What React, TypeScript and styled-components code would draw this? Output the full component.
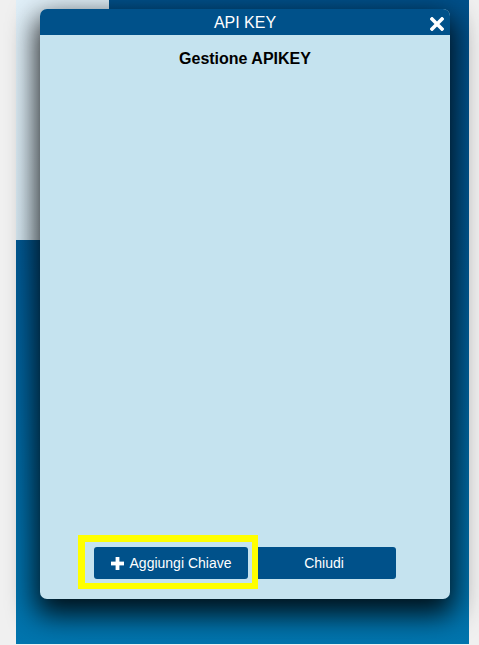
import { FC } from "react";
import styled, { createGlobalStyle } from "styled-components";

const GlobalStyle = createGlobalStyle`
    html, body {
        margin: 0;
        padding: 0;
        background: #f0f0f0;
        font-family: "Liberation Sans", Arial, sans-serif;
    }
`;

const PlusIcon: FC = () => (
    <svg width="13" height="13" viewBox="0 0 13 13" aria-hidden>
        <rect x="4.6" y="0" width="3.8" height="13" fill="#ffffff" />
        <rect x="0" y="4.6" width="13" height="3.8" fill="#ffffff" />
    </svg>
);

const CloseIcon: FC = () => (
    <svg width="14" height="14" viewBox="0 0 14 14" aria-hidden>
        <path d="M2 2 L12 12 M12 2 L2 12" stroke="#ffffff" strokeWidth="3.6" strokeLinecap="square" />
    </svg>
);

export default function App() {
    return <>
        <GlobalStyle />
        <Page>
            <SideCard />
            <Modal>
                <Header>
                    API KEY
                    <CloseButton aria-label="Chiudi">
                        <CloseIcon />
                    </CloseButton>
                </Header>
                <Body>
                    <Title>Gestione APIKEY</Title>
                    <Footer>
                        <Highlighted>
                            <Button $width={154}>
                                <PlusIcon />
                                Aggiungi Chiave
                            </Button>
                            <Marker />
                        </Highlighted>
                        <Button $width={144}>Chiudi</Button>
                    </Footer>
                </Body>
            </Modal>
        </Page>
    </>
}

const Page = styled.div`
    position: relative;
    height: 644px;
    margin: 0 10px 0 16px;
    background: linear-gradient(180deg, #00508a 0%, #005a95 40%, #0075ae 100%);
`;

const SideCard = styled.div`
    width: 93px;
    height: 240px;
    background: linear-gradient(180deg, #e1f0f9 0%, #d9ebf5 100%);
`;

const Modal = styled.div`
    position: absolute;
    left: 24px;
    top: 9px;
    width: 410px;
    height: 590px;
    display: flex;
    flex-direction: column;
    background: #c5e3ef;
    border-radius: 7px;
    overflow: hidden;
    box-shadow: 0 12px 28px 4px rgba(0, 0, 0, 0.85);
`;

const Header = styled.div`
    position: relative;
    height: 26px;
    box-sizing: border-box;
    padding-top: 2px;
    line-height: 24px;
    background: #00518a;
    color: #ffffff;
    font-size: 16px;
    text-align: center;
`;

const CloseButton = styled.button`
    position: absolute;
    right: 6px;
    top: 8px;
    width: 14px;
    height: 14px;
    padding: 0;
    border: 0;
    background: transparent;
    display: flex;
    cursor: pointer;
`;

const Body = styled.div`
    flex: 1;
    display: flex;
    flex-direction: column;
    padding: 15px 0 20px;
`;

const Title = styled.div`
    flex: 1;
    font-size: 16px;
    line-height: 18px;
    font-weight: bold;
    color: #000000;
    text-align: center;
`;

const Footer = styled.div`
    display: flex;
    justify-content: center;
    gap: 4px;
`;

const Highlighted = styled.div`
    position: relative;
    display: flex;
`;

const Marker = styled.div`
    position: absolute;
    top: -12px;
    left: -16px;
    right: -10px;
    bottom: -10px;
    border-style: solid;
    border-color: #ffff00;
    border-width: 7px 6px 6px 7px;
    pointer-events: none;
`;

const Button = styled.button<{ $width: number }>`
    width: ${props => props.$width}px;
    height: 32px;
    display: flex;
    align-items: center;
    justify-content: center;
    gap: 6px;
    padding: 0;
    border: 0;
    border-radius: 3px;
    background: #00518a;
    color: #ffffff;
    font-family: "Liberation Sans", Arial, sans-serif;
    font-size: 14px;
    cursor: pointer;
`;
